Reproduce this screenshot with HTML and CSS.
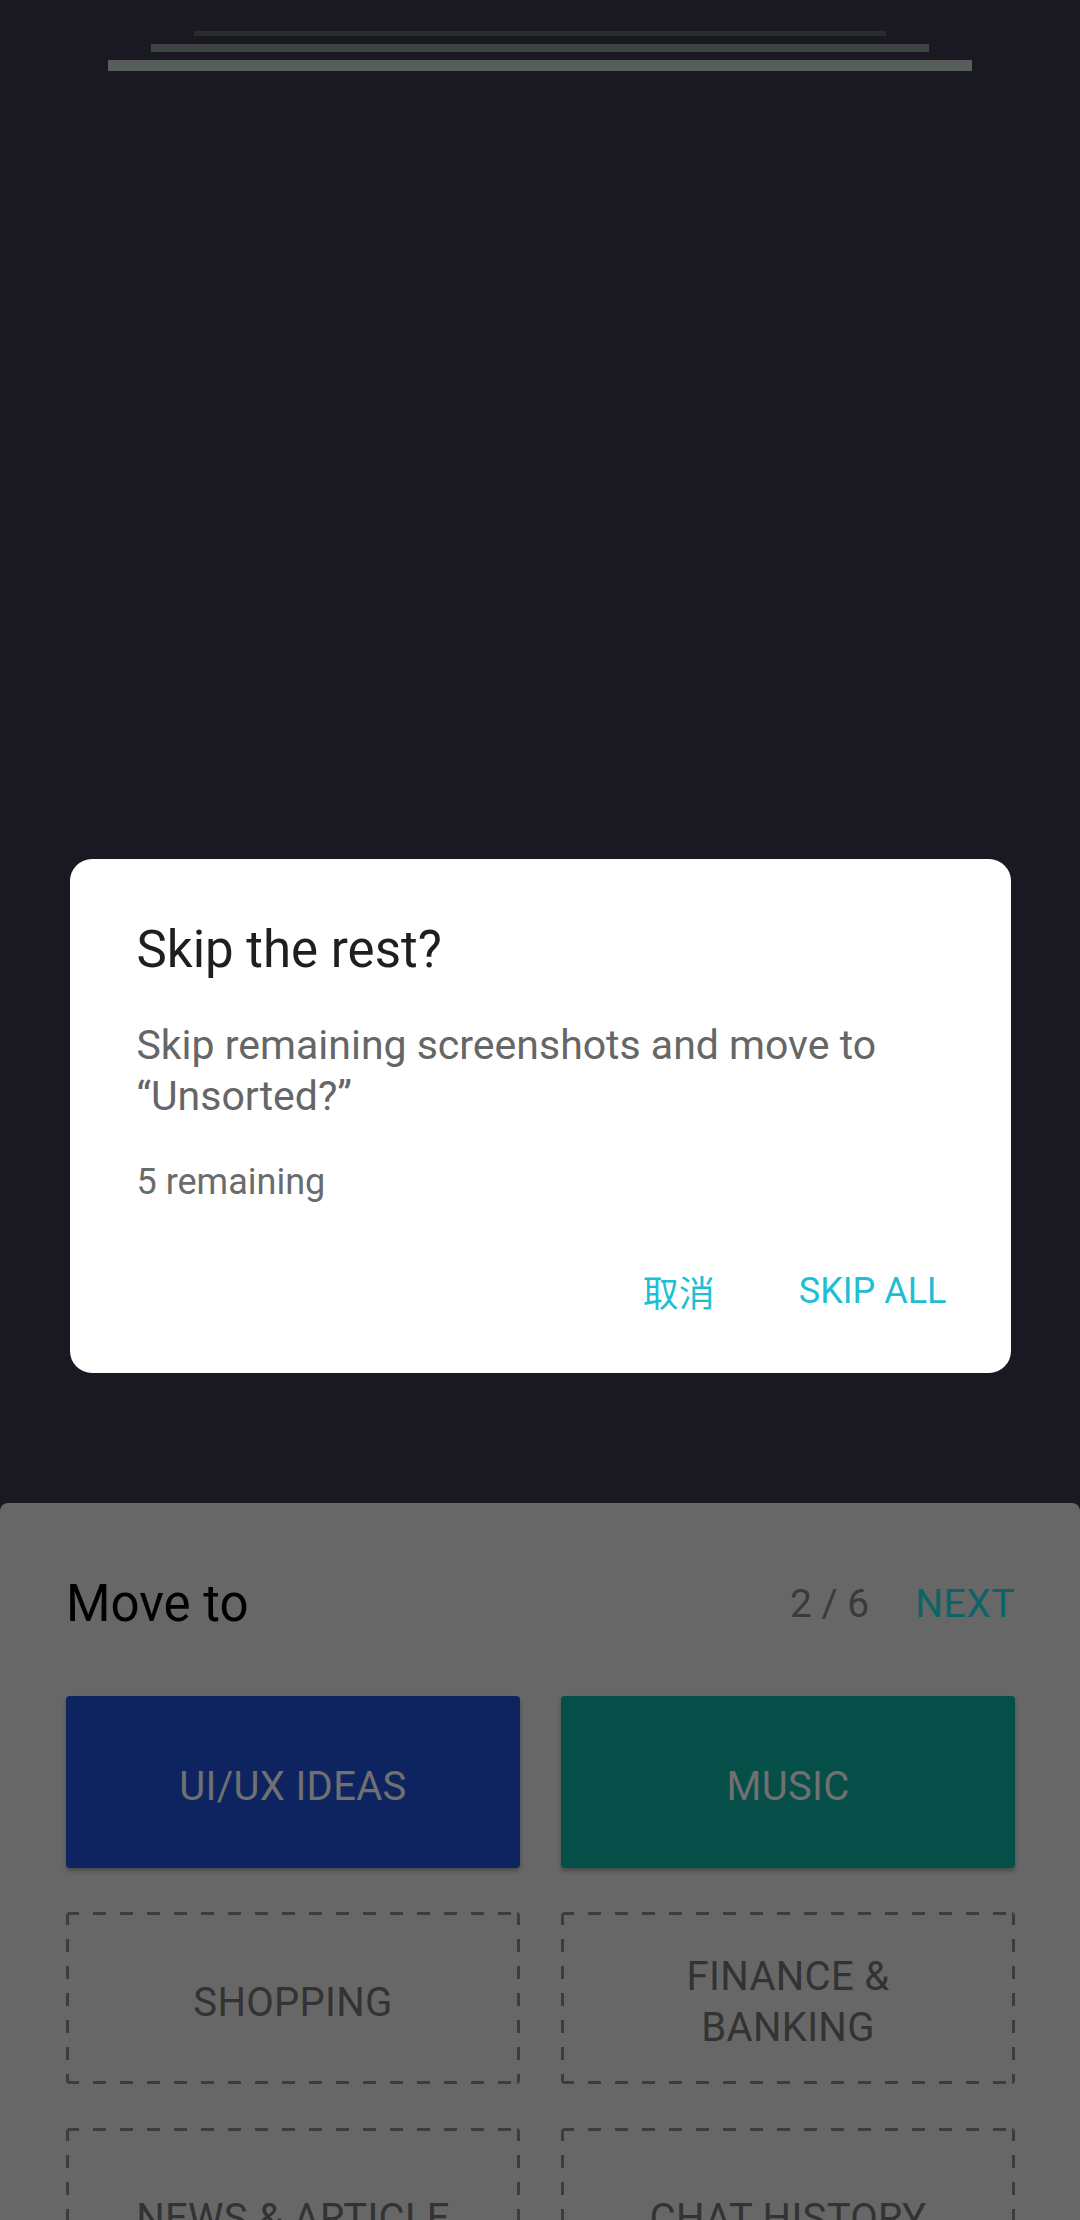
FILE: index.html
```html
<!DOCTYPE html>
<html lang="en">
<head>
<meta charset="utf-8">
<title>Skip the rest?</title>
<link rel="stylesheet" href="styles.css">
</head>
<body>
<div class="screen">
  <div class="top-area">
    <div class="stack">
      <div class="stack-line l1"></div>
      <div class="stack-line l2"></div>
      <div class="stack-line l3"></div>
    </div>
  </div>
  <section class="sheet">
    <header class="sheet-head">
      <h2 class="sheet-title">Move to</h2>
      <div class="sheet-nav">
        <span class="count">2 / 6</span>
        <span class="next">NEXT</span>
      </div>
    </header>
    <div class="tiles">
      <div class="tile filled blue">UI/UX IDEAS</div>
      <div class="tile filled teal">MUSIC</div>
      <div class="tile dashed">SHOPPING</div>
      <div class="tile dashed">FINANCE &amp; BANKING</div>
      <div class="tile dashed">NEWS &amp; ARTICLE</div>
      <div class="tile dashed">CHAT HISTORY</div>
    </div>
  </section>
  <div class="overlay">
    <div class="dialog">
      <h1 class="dialog-title">Skip the rest?</h1>
      <p class="dialog-body">Skip remaining screenshots and move to “Unsorted?”</p>
      <p class="dialog-note">5 remaining</p>
      <div class="actions">
        <span class="btn cjk">取消</span>
        <span class="btn">SKIP ALL</span>
      </div>
    </div>
  </div>
</div>
</body>
</html>
```
FILE: styles.css
```css
html, body {
  margin: 0;
  padding: 0;
}
body {
  background: #1a1921;
  font-family: Roboto, "Noto Sans", "Noto Sans CJK SC", sans-serif;
}
.screen {
  position: relative;
  width: 1080px;
  height: 2220px;
  overflow: hidden;
  display: flex;
  flex-direction: column;
}
.top-area {
  flex: 1;
}
.stack {
  padding-top: 31px;
  display: flex;
  flex-direction: column;
  align-items: center;
  gap: 8px;
}
.stack-line.l1 { width: 692px; height: 5px; background: #2a2c30; }
.stack-line.l2 { width: 778px; height: 8px; background: #3d4242; }
.stack-line.l3 { width: 864px; height: 11px; background: #575d5a; }

.sheet {
  flex: none;
  height: 717px;
  background: #676767;
  border-radius: 8px 8px 0 0;
  padding: 71px 65px 0 66px;
  box-sizing: border-box;
}
.sheet-head {
  display: flex;
  align-items: center;
  justify-content: space-between;
  height: 60px;
}
.sheet-title {
  margin: 0;
  font-weight: 400;
  font-size: 51px;
  line-height: 60px;
  color: #000;
}
.sheet-nav {
  display: flex;
  align-items: center;
  gap: 46px;
  font-size: 39px;
}
.count { color: #3a3a3a; }
.next { color: #0b6567; letter-spacing: 0.5px; }

.tiles {
  margin-top: 62px;
  display: grid;
  grid-template-columns: repeat(2, 1fr);
  grid-auto-rows: 172px;
  column-gap: 41px;
  row-gap: 44px;
}
.tile {
  display: flex;
  align-items: center;
  justify-content: center;
  text-align: center;
  padding: 8px 48px 0;
  font-size: 40px;
  line-height: 51px;
  letter-spacing: 0.3px;
  border-radius: 4px;
}
.tile.filled {
  color: #707070;
  box-shadow: 0 3px 4px rgba(0, 0, 0, 0.28);
}
.tile.blue { background: #0e2461; }
.tile.teal { background: #064e48; }
.tile.dashed {
  color: #333333;
  background:
    repeating-linear-gradient(90deg, #3d3d3d 0 13px, transparent 13px 27px) left top / 100% 3px no-repeat,
    repeating-linear-gradient(90deg, #3d3d3d 0 13px, transparent 13px 27px) left bottom / 100% 3px no-repeat,
    repeating-linear-gradient(180deg, #3d3d3d 0 13px, transparent 13px 27px) left top / 3px 100% no-repeat,
    repeating-linear-gradient(180deg, #3d3d3d 0 13px, transparent 13px 27px) right top / 3px 100% no-repeat;
}

.overlay {
  position: absolute;
  inset: 0;
  display: flex;
  align-items: center;
  justify-content: center;
  padding-top: 12px;
  box-sizing: border-box;
}
.dialog {
  width: 941px;
  box-sizing: border-box;
  background: #ffffff;
  border-radius: 22px;
  padding: 61px 64px 35px 67px;
}
.dialog-title {
  margin: 0;
  font-weight: 400;
  font-size: 51px;
  line-height: 60px;
  color: #1f1f1f;
}
.dialog-body {
  margin: 40px 0 0;
  font-size: 41px;
  line-height: 51px;
  color: #666666;
}
.dialog-note {
  margin: 38px 0 0;
  font-size: 36px;
  line-height: 44px;
  color: #6b6b6b;
}
.actions {
  margin-top: 40px;
  display: flex;
  justify-content: flex-end;
  gap: 84px;
}
.btn {
  font-size: 36px;
  line-height: 94px;
  color: #1ebfd5;
}
.btn.cjk {
  font-family: "Noto Sans CJK SC", sans-serif;
}
```
